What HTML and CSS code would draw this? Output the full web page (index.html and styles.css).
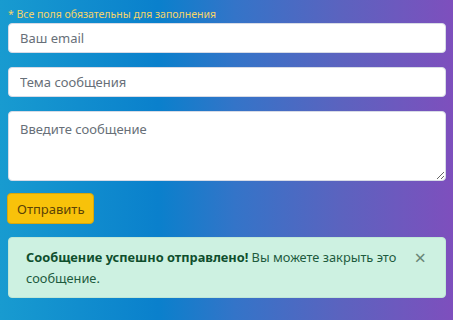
FILE: index.html
```html
<!DOCTYPE html>
<html>
<head>
    <title>Обратная связь</title>
    <link rel="stylesheet" href="styles.css">
</head>
<body>
    <form class="feedback">
        <p class="note">* Все поля обязательны для заполнения</p>
        <input class="field" type="email" placeholder="Ваш email">
        <input class="field" type="text" placeholder="Тема сообщения">
        <textarea class="field area" placeholder="Введите сообщение"></textarea>
        <button type="button" class="send">Отправить</button>
        <div class="alert">
            <p><strong>Сообщение успешно отправлено!</strong> Вы можете закрыть это сообщение.</p>
            <span class="close">&times;</span>
        </div>
    </form>
</body>
</html>
```
FILE: styles.css
```css
html, body {
    height: 100%;
}

body {
    margin: 0;
    background: linear-gradient(to right, #189bd0 0%, #0a80cc 35%, #3474c8 52%, #5b63bf 75%, #7e4fbd 100%);
    font-family: "Noto Sans", "Open Sans", sans-serif;
}

.feedback {
    display: flex;
    flex-direction: column;
    align-items: flex-start;
    padding: 0 7px 0 8px;
}

.note {
    margin: 7px 0 2px 0;
    font-size: 10.5px;
    color: #f3d46a;
}

.field {
    box-sizing: border-box;
    width: 100%;
    height: 30px;
    margin-bottom: 14px;
    padding: 0 11px;
    border: 1px solid #d7dbe6;
    border-radius: 4px;
    background: #fff;
    font-family: inherit;
    font-size: 13px;
}

.field::placeholder {
    color: #676f78;
}

.area {
    height: 70px;
    padding-top: 8px;
    margin-bottom: 13px;
    resize: vertical;
}

.send {
    height: 31px;
    padding: 0 9px;
    border: 1px solid #d9a70a;
    border-radius: 4px;
    background: #f8c20a;
    color: #5b4306;
    font-family: inherit;
    font-size: 13px;
    margin-left: -1px;
    margin-top: -1px;
}

.alert {
    box-sizing: border-box;
    width: 100%;
    margin-top: 13px;
    display: flex;
    align-items: flex-start;
    padding: 9px 17px 8px 17px;
    border: 1px solid #bfe7d6;
    border-radius: 4px;
    background: #cdf1e1;
    color: #1d5b3e;
    font-size: 12.8px;
    line-height: 21px;
}

.alert p {
    margin: 0;
    flex: 1;
    padding-right: 8px;
}

.alert strong {
    color: #0f4f2d;
}

.close {
    font-size: 20px;
    color: #6a8676;
    line-height: 22px;
    margin-right: 2px;
}
```
